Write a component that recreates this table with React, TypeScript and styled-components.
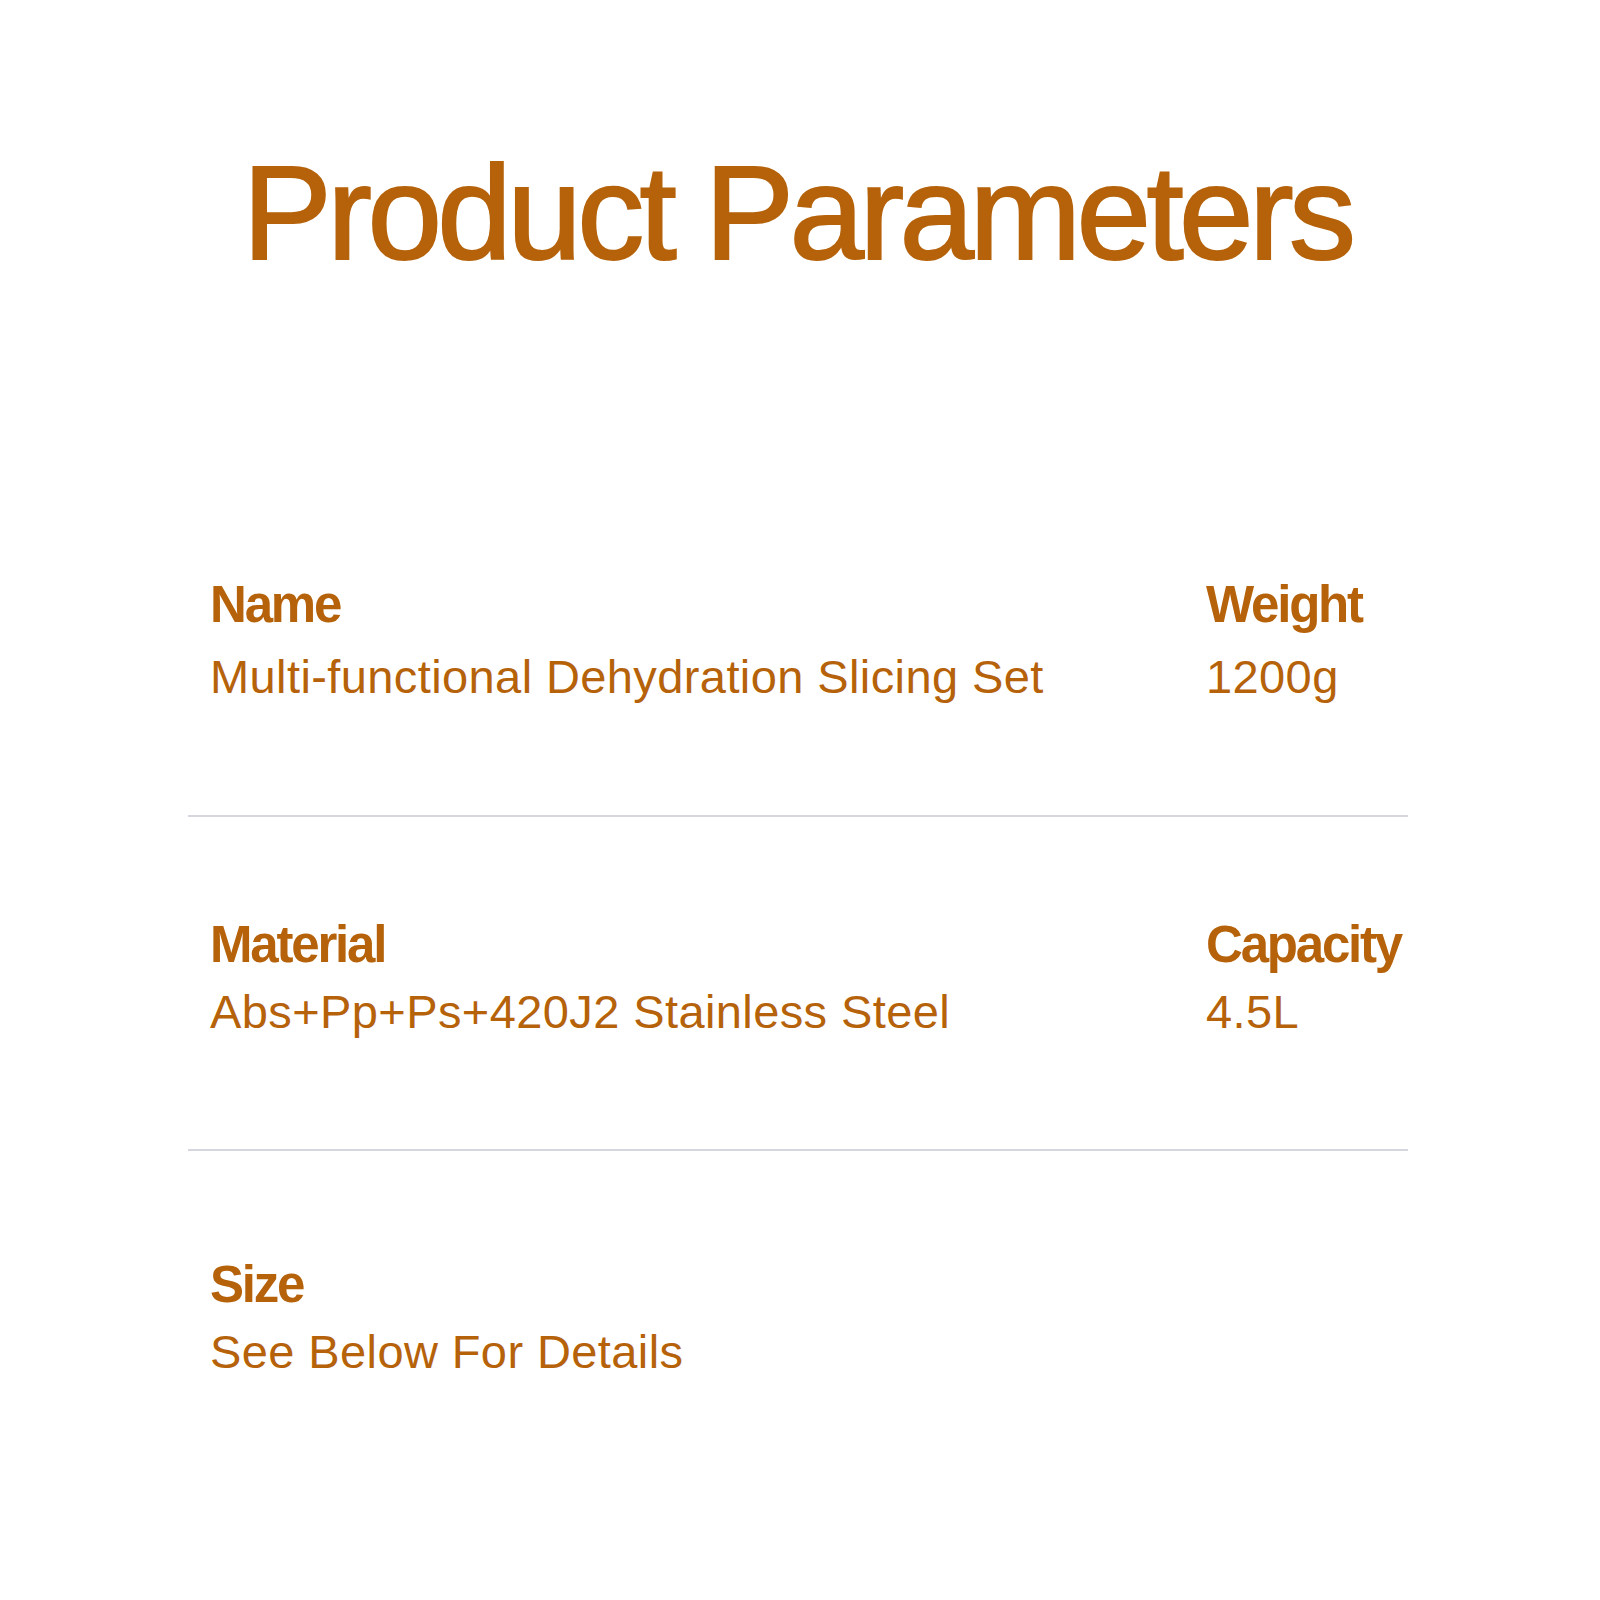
import React from "react";
import styled, { createGlobalStyle } from "styled-components";

const brand = "#b5620a";

const Global = createGlobalStyle`
  html, body { margin: 0; padding: 0; background: #ffffff; }
  body { font-family: "Liberation Sans", Arial, sans-serif; }
`;

const Page = styled.main`
  width: 1600px;
  min-height: 1600px;
  box-sizing: border-box;
  padding-top: 146px;
  background: #ffffff;
`;

const Title = styled.h1`
  margin: 0;
  font-family: "Liberation Sans", Arial, sans-serif;
  font-weight: 400;
  font-size: 134px;
  line-height: 134px;
  letter-spacing: -4.6px;
  -webkit-text-stroke: 2px ${brand};
  color: ${brand};
  text-align: center;
  padding-right: 6px;
`;

const Table = styled.section`
  margin: 299px 0 0 188px;
  width: 1220px;
  display: flex;
  flex-direction: column;
`;

const Row = styled.div<{ $top: number; $bottom: number; $divider?: boolean }>`
  display: grid;
  grid-template-columns: 996px 1fr;
  padding: ${(p) => p.$top}px 0 ${(p) => p.$bottom}px 22px;
  border-bottom: ${(p) => (p.$divider ? "2px solid #d6d6df" : "none")};
`;

const Cell = styled.div<{ $gap: number }>`
  display: flex;
  flex-direction: column;
  gap: ${(p) => p.$gap}px;
`;

const Label = styled.div`
  font-family: "Liberation Sans", Arial, sans-serif;
  font-weight: 700;
  font-size: 51px;
  line-height: 52px;
  letter-spacing: -2.2px;
  color: ${brand};
  white-space: nowrap;
`;

const Value = styled.div`
  font-family: "Liberation Sans", Arial, sans-serif;
  font-weight: 400;
  font-size: 47px;
  line-height: 46px;
  letter-spacing: 0.4px;
  color: ${brand};
  white-space: nowrap;
`;

type Item = { label: string; value: string };
type RowData = {
  items: Item[];
  top: number;
  bottom: number;
  gap: number;
  divider: boolean;
};

const rows: RowData[] = [
  {
    items: [
      { label: "Name", value: "Multi-functional Dehydration Slicing Set" },
      { label: "Weight", value: "1200g" },
    ],
    top: 0,
    bottom: 115,
    gap: 23,
    divider: true,
  },
  {
    items: [
      { label: "Material", value: "Abs+Pp+Ps+420J2 Stainless Steel" },
      { label: "Capacity", value: "4.5L" },
    ],
    top: 102,
    bottom: 114,
    gap: 18,
    divider: true,
  },
  {
    items: [{ label: "Size", value: "See Below For Details" }],
    top: 108,
    bottom: 0,
    gap: 18,
    divider: false,
  },
];

export default function App() {
  return (
    <>
      <Global />
      <Page>
        <Title>Product Parameters</Title>
        <Table>
          {rows.map((r, i) => (
            <Row key={i} $top={r.top} $bottom={r.bottom} $divider={r.divider}>
              {r.items.map((it) => (
                <Cell key={it.label} $gap={r.gap}>
                  <Label>{it.label}</Label>
                  <Value>{it.value}</Value>
                </Cell>
              ))}
            </Row>
          ))}
        </Table>
      </Page>
    </>
  );
}
